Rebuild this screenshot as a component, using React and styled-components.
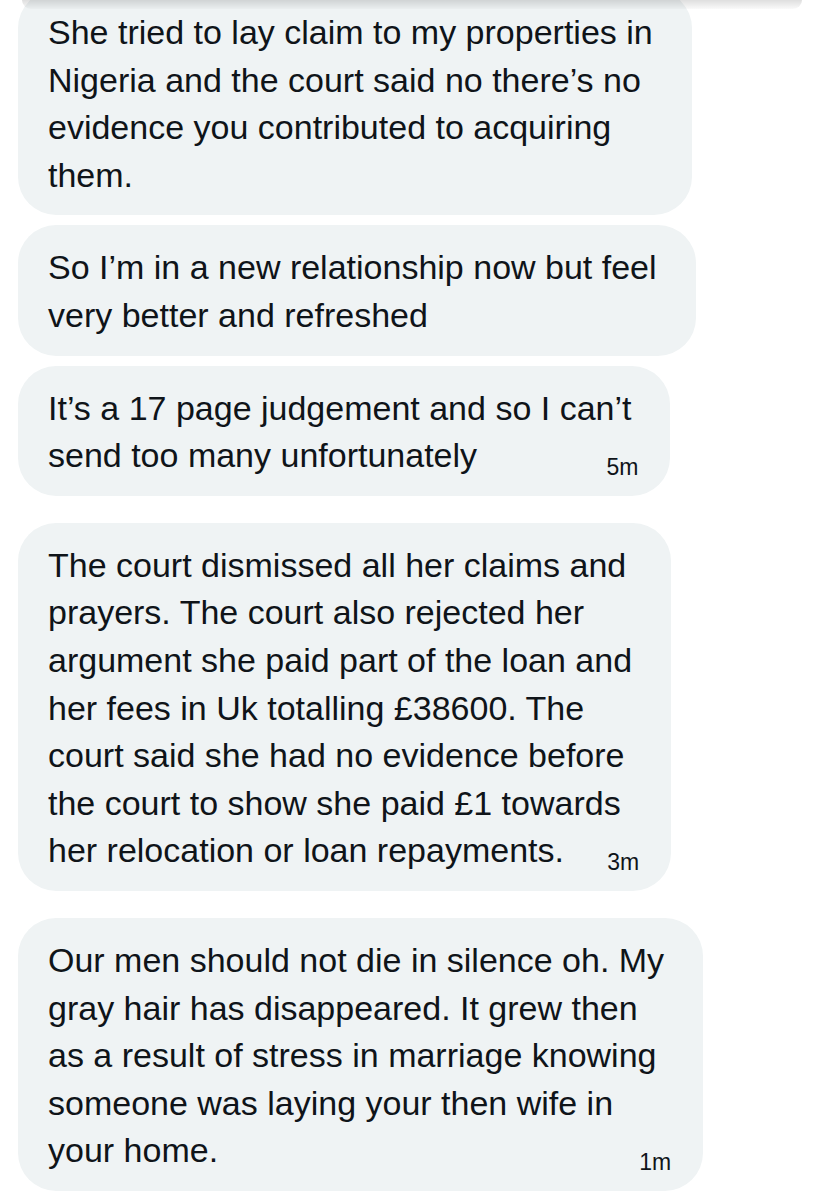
import React from 'react';
import styled, { createGlobalStyle } from 'styled-components';

const GlobalStyle = createGlobalStyle`
  html, body {
    margin: 0;
    padding: 0;
    background: #ffffff;
  }
  body {
    font-family: "Liberation Sans", Arial, sans-serif;
    color: #0f1419;
  }
`;

const Thread = styled.div`
  position: relative;
  height: 1200px;
  overflow: hidden;
  padding-left: 18px;
  display: flex;
  flex-direction: column;
  gap: 27px;
`;

// shadow of the card that sits above, cut off by the crop
const TopShade = styled.div`
  position: absolute;
  top: 0;
  left: 22px;
  width: 780px;
  height: 9px;
  border-bottom-right-radius: 14px;
  border-bottom-left-radius: 14px;
  background: linear-gradient(to bottom, rgba(0, 0, 0, 0.13), rgba(0, 0, 0, 0.02));
  pointer-events: none;
`;

const Group = styled.div`
  display: flex;
  flex-direction: column;
  align-items: flex-start;
  gap: 10px;
  margin-top: ${(p) => (p.$first ? '-10px' : '0')};
`;

const Bubble = styled.div`
  background: #eff3f4;
  border-radius: 38px;
  padding: 19px 39px 16px 30px;
`;

const Line = styled.div`
  font-size: 34px;
  line-height: 47.6px;
  white-space: nowrap;
`;

const LastRow = styled.div`
  display: flex;
  align-items: flex-end;
  justify-content: space-between;
  gap: 24px;
`;

const Stamp = styled.span`
  font-size: 23px;
  line-height: 25px;
  margin-right: -7px;
  color: #0f1419;
  white-space: nowrap;
`;

const groups = [
  [
    {
      lines: [
        'She tried to lay claim to my properties in',
        'Nigeria and the court said no there\u2019s no',
        'evidence you contributed to acquiring',
        'them.',
      ],
    },
    {
      lines: ['So I\u2019m in a new relationship now but feel', 'very better and refreshed'],
    },
    {
      lines: ['It\u2019s a 17 page judgement and so I can\u2019t', 'send too many unfortunately'],
      time: '5m',
    },
  ],
  [
    {
      lines: [
        'The court dismissed all her claims and',
        'prayers. The court also rejected her',
        'argument she paid part of the loan and',
        'her fees in Uk totalling \u00a338600. The',
        'court said she had no evidence before',
        'the court to show she paid \u00a31 towards',
        'her relocation or loan repayments.',
      ],
      time: '3m',
    },
  ],
  [
    {
      lines: [
        'Our men should not die in silence oh. My',
        'gray hair has disappeared. It grew then',
        'as a result of stress in marriage knowing',
        'someone was laying your then wife in',
        'your home.',
      ],
      time: '1m',
    },
  ],
];

function Message({ lines, time }) {
  const body = time ? lines.slice(0, -1) : lines;
  const last = lines[lines.length - 1];
  return (
    <Bubble>
      {body.map((text, i) => (
        <Line key={i}>{text}</Line>
      ))}
      {time && (
        <LastRow>
          <Line>{last}</Line>
          <Stamp>{time}</Stamp>
        </LastRow>
      )}
    </Bubble>
  );
}

export default function App() {
  return (
    <>
      <GlobalStyle />
      <Thread>
        {groups.map((msgs, gi) => (
          <Group key={gi} $first={gi === 0}>
            {msgs.map((m, mi) => (
              <Message key={mi} {...m} />
            ))}
          </Group>
        ))}
        <TopShade />
      </Thread>
    </>
  );
}
